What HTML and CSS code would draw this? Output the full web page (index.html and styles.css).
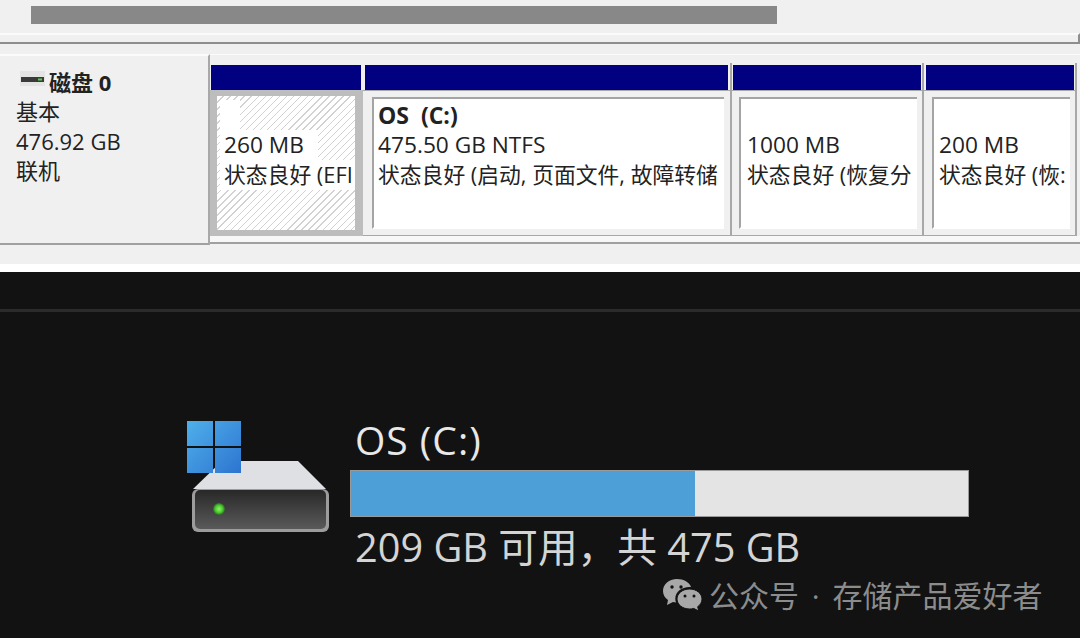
FILE: index.html
```html
<!DOCTYPE html>
<html lang="zh-CN">
<head>
  <meta charset="UTF-8">
  <title>磁盘 0</title>
  <link rel="stylesheet" href="styles.css">
</head>
<body>
  <!-- Disk management -->
  <section class="diskmgmt">
    <div class="scroll-track"><div class="scroll-thumb"></div></div>
    <div class="scroll-edge"></div>

    <div class="disk-row">
      <div class="disk-label">
        <div class="disk-title">
          <svg class="mini-drive" width="25" height="16" viewBox="0 0 25 16">
            <rect x="0" y="0" width="25" height="15" fill="#e4e4e4"/>
            <rect x="1" y="6" width="23" height="5" fill="#3a3a3a"/>
            <rect x="18" y="7.500" width="4" height="2" fill="#4fd04f"/>
          </svg>
          <strong>磁盘 0</strong>
        </div>
        <div>基本</div>
        <div>476.92 GB</div>
        <div>联机</div>
      </div>

      <div class="partitions">
        <div class="partition p-efi">
          <div class="part-head"></div>
          <div class="part-body">
            <div class="part-inner hatched">
              <div><span class="on-white name-gap">&nbsp;</span></div>
              <div class="part-size"><span class="on-white size-gap">260 MB</span></div>
              <div class="on-white">状态良好 (EFI</div>
            </div>
          </div>
        </div>
        <div class="partition p-os">
          <div class="part-head"></div>
          <div class="part-body">
            <div class="part-inner">
              <div class="part-name">OS&nbsp; (C:)</div>
              <div class="part-size">475.50 GB NTFS</div>
              <div>状态良好 (启动, 页面文件, 故障转储</div>
            </div>
          </div>
        </div>
        <div class="partition p-rec">
          <div class="part-head"></div>
          <div class="part-body">
            <div class="part-inner">
              <div class="part-name">&nbsp;</div>
              <div class="part-size">1000 MB</div>
              <div>状态良好 (恢复分</div>
            </div>
          </div>
        </div>
        <div class="partition p-last">
          <div class="part-head"></div>
          <div class="part-body">
            <div class="part-inner">
              <div class="part-name">&nbsp;</div>
              <div class="part-size">200 MB</div>
              <div>状态良好 (恢:</div>
            </div>
          </div>
        </div>
      </div>
    </div>
  </section>

  <!-- Explorer drive tile -->
  <section class="explorer">
    <div class="drive-tile">
      <svg class="drive-icon" width="146" height="116" viewBox="0 0 146 116">
        <defs>
          <linearGradient id="face" x1="0" y1="0" x2="0" y2="1">
            <stop offset="0" stop-color="#282828"/>
            <stop offset="1" stop-color="#5a5a5a"/>
          </linearGradient>
          <linearGradient id="pane" gradientUnits="userSpaceOnUse" x1="0" y1="0" x2="54" y2="52">
            <stop offset="0" stop-color="#4fb0ea"/>
            <stop offset="1" stop-color="#2d74d0"/>
          </linearGradient>
          <radialGradient id="led">
            <stop offset="0" stop-color="#8cf56a"/>
            <stop offset="0.6" stop-color="#4ccb2e"/>
            <stop offset="1" stop-color="#2c6b24"/>
          </radialGradient>
        </defs>
        <path d="M35 40H111L139 68H6Z" fill="#dfe0e4"/>
        <rect x="5" y="68" width="137" height="43" rx="6" fill="#9c9c9c"/>
        <rect x="8" y="69" width="131" height="39" rx="5" fill="url(#face)"/>
        <circle cx="32" cy="88" r="6" fill="url(#led)"/>
        <rect x="0" y="0" width="26" height="25" fill="url(#pane)"/>
        <rect x="28" y="0" width="26" height="25" fill="url(#pane)"/>
        <rect x="0" y="27" width="26" height="25" fill="url(#pane)"/>
        <rect x="28" y="27" width="26" height="25" fill="url(#pane)"/>
      </svg>
      <div class="drive-info">
        <div class="drive-name">OS (C:)</div>
        <div class="usage"><div class="usage-fill"></div></div>
        <div class="drive-free">209 GB 可用，共 475 GB</div>
      </div>
    </div>
    <div class="watermark">
      <svg width="40" height="34" viewBox="0 0 40 34">
        <path d="M15 2C7 2 1 7 1 14c0 4 2 7 5 9l-1 5 6-3c1 .3 2 .4 3 .5-.5-1.300-.7-2.500-.7-3.800C13.300 15 19.600 10 27.500 10c.5 0 1 0 1.500.1C27.500 5.300 21.800 2 15 2Z" fill="#a8a8a8"/>
        <path d="M27.500 12C20.500 12 15 16.500 15 22s5.500 10 12.500 10c1.500 0 2.900-.2 4.200-.6l5 2.600-1-4.300c2.700-1.800 4.300-4.600 4.300-7.700 0-5.500-5.500-10-12.500-10Z" fill="#a8a8a8" stroke="#111" stroke-width="1"/>
        <circle cx="10" cy="10" r="1.700" fill="#111"/>
        <circle cx="19" cy="10" r="1.700" fill="#111"/>
        <circle cx="23" cy="19" r="1.500" fill="#111"/>
        <circle cx="32" cy="19" r="1.500" fill="#111"/>
      </svg>
      <span>公众号 · 存储产品爱好者</span>
    </div>
  </section>
</body>
</html>
```

FILE: styles.css
```css
* {
  box-sizing: border-box;
}
html, body {
  margin: 0;
  padding: 0;
}
body {
  width: 1080px;
  height: 638px;
  overflow: hidden;
  background: #fff;
  font-family: "Open Sans", "Noto Sans CJK SC", sans-serif;
}

/* Disk management */
.diskmgmt {
  height: 264px;
  background: #f0f0f0;
  color: #222;
  font-size: 22px;
  overflow: hidden;
}
.scroll-track {
  height: 33px;
  padding: 6px 0 0 31px;
}
.scroll-thumb {
  width: 746px;
  height: 18px;
  background: #888;
}
.scroll-edge {
  height: 11px;
  border-top: 2px solid #fbfbfb;
  border-bottom: 2px solid #8e8e8e;
  border-right: 2px solid #8e8e8e;
}
.disk-row {
  display: flex;
  margin-top: 10px;
  height: 190px;
}
.disk-label {
  width: 210px;
  height: 191px;
  padding: 12px 0 0 16px;
  background: #f0f0f0;
  border-top: 2px solid #fbfbfb;
  border-right: 2px solid #a8a8a8;
  border-bottom: 2px solid #a0a0a0;
  line-height: 29.500px;
}
.disk-title {
  display: flex;
  align-items: center;
  height: 29px;
}
.disk-title strong {
  margin-left: 4px;
  font-size: 22px;
}
.mini-drive {
  margin: -8px 0 0 4px;
}
.partitions {
  display: flex;
  width: 870px;
  height: 190px;
  padding-top: 8px;
  border-top: 1px solid #fbfbfb;
  border-bottom: 2px solid #a0a0a0;
  background: linear-gradient(#f0f0f0 181px, #f7f7f7 181px);
}
.partition {
  display: flex;
  flex-direction: column;
  height: 173px;
  padding-top: 2px;
  border-right: 2px solid #a8a8a8;
  border-bottom: 1px solid #a8a8a8;
}
.p-efi { width: 153px; border-right: 0; border-bottom: 0; }
.p-os { width: 369px; }
.p-rec { width: 192px; }
.p-last { width: 153px; }
.part-head {
  height: 25px;
  flex: none;
  background: #000080;
}
.p-efi .part-head { margin: 0 2px 0 1px; }
.p-os .part-head { margin: 0 2px; }
.p-rec .part-head { margin: 0 1px; }
.p-last .part-head { margin: 0 1px 0 2px; }
.part-body {
  flex: 1;
  min-height: 0;
  padding-top: 6px;
  padding-bottom: 6px;
  border-top: 1px solid #a8a8a8;
}
.p-efi .part-body { padding: 6px 8px 6px 7px; background: #bdbdbd; border-top: 0; }
.p-os .part-body { padding-left: 9px; padding-right: 6px; }
.p-rec .part-body { padding-left: 7px; padding-right: 5px; }
.p-last .part-body { padding-left: 8px; padding-right: 5px; }
.part-inner {
  height: 100%;
  padding: 1px 0 0 6px;
  background: #fff;
  border-top: 2px solid #a4a4a4;
  border-left: 2px solid #a4a4a4;
  border-bottom: 2px solid #fff;
  line-height: 30px;
  font-size: 21.800px;
  white-space: nowrap;
  overflow: hidden;
}
.p-os .part-inner { padding-left: 4px; }
.p-last .part-inner { padding-left: 5px; }
.part-inner.hatched {
  border: 0;
  padding: 4px 0 0 3px;
  background: repeating-linear-gradient(135deg, #fff 0, #fff 4px, #d2d2d2 4px, #d2d2d2 5px);
}
.part-inner.hatched div {
  height: 30px;
}
.part-inner .on-white {
  background: #fff;
  display: inline-block;
}
.part-inner div.on-white {
  display: block;
  padding-left: 4px;
}
.part-inner .name-gap {
  width: 20px;
}
.part-inner .size-gap {
  padding: 0 14px 0 4px;
}
.part-name {
  font-weight: bold;
  font-size: 23px;
}
.part-size {
  font-size: 22.700px;
}

/* Explorer tile */
.explorer {
  height: 366px;
  margin-top: 8px;
  padding-top: 37px;
  background: #121212;
  color: #ddd;
  position: relative;
  overflow: hidden;
}
.explorer::before {
  content: "";
  display: block;
  height: 3px;
  background: #2b2b2b;
}
.drive-tile {
  display: flex;
  padding: 109px 0 0 187px;
}
.drive-icon {
  flex: none;
  margin-right: 17px;
}
.drive-info {
  width: 620px;
  margin-top: -4px;
}
.drive-name {
  margin-left: 5px;
  font-size: 39px;
  line-height: 46px;
  letter-spacing: 1px;
  color: #e8e8e8;
}
.usage {
  width: 619px;
  height: 47px;
  margin-top: 7px;
  background: #e4e4e4;
  border: 1px solid #9a9a9a;
}
.usage-fill {
  width: 344px;
  height: 100%;
  background: #4d9fd8;
}
.drive-free {
  margin: 6px 0 0 5px;
  font-size: 39.700px;
  line-height: 48px;
  color: #d4d4d4;
}
.watermark {
  position: absolute;
  left: 662px;
  top: 300px;
  display: flex;
  align-items: center;
  gap: 7px;
  font-size: 30px;
  word-spacing: 5px;
  color: #8c8c8c;
  white-space: nowrap;
}
```
